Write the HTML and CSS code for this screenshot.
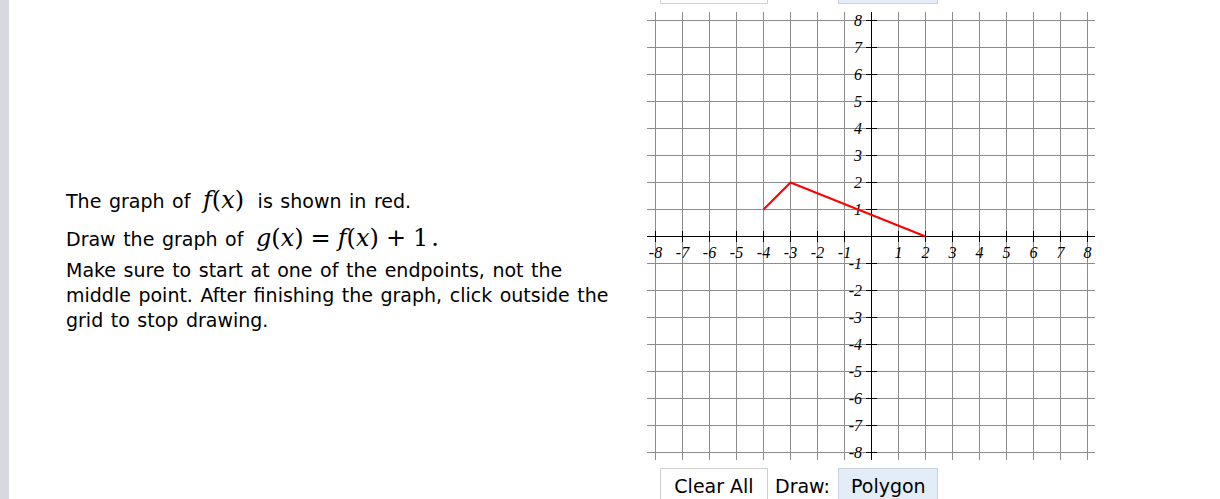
FILE: index.html
```html
<!DOCTYPE html>
<html lang="en">
<head>
  <meta charset="UTF-8" />
  <title>Graph transformation</title>
  <link rel="stylesheet" href="styles.css">
</head>
<body>
  <div class="page">
    <!-- bottom edge of the previous question's toolbar, scrolled out of view -->
    <div class="tools tools-prev">
      <div class="btn btn-clear"></div><span class="draw-label"></span><div class="btn btn-mode"></div>
    </div>

    <div class="question">
      <div class="prompt">
        <div class="line line-math">The graph of <span class="math"><i>f</i>(<i>x</i>)</span> is shown in red.</div>
        <div class="line line-math">Draw the graph of <span class="math math-end"><i>g</i>(<i>x</i>)<span class="op">=</span><i>f</i>(<i>x</i>)<span class="op">+</span>1<span class="dot">.</span></span></div>
        <div class="line">Make sure to start at one of the endpoints, not the middle point. After finishing the graph, click outside the grid to stop drawing.</div>
      </div>

      <div class="graph">
        <svg class="grid" width="448" height="448" viewBox="0 0 448 448">
          <!-- grid lines -->
          <path class="gridline" d="M8.5 0V448M35.5 0V448M62.5 0V448M89.5 0V448M116.5 0V448M143.5 0V448M170.5 0V448M197.5 0V448M251.5 0V448M278.5 0V448M305.5 0V448M332.5 0V448M359.5 0V448M386.5 0V448M413.5 0V448M440.5 0V448
            M0 8.5H448M0 35.5H448M0 62.5H448M0 89.5H448M0 116.5H448M0 143.5H448M0 170.5H448M0 197.5H448M0 251.5H448M0 278.5H448M0 305.5H448M0 332.5H448M0 359.5H448M0 386.5H448M0 413.5H448M0 440.5H448"/>
          <!-- axes and ticks -->
          <path class="axis" d="M0 224.5H448M224.5 0V448
            M8.5 219V230M35.5 219V230M62.5 219V230M89.5 219V230M116.5 219V230M143.5 219V230M170.5 219V230M197.5 219V230M251.5 219V230M278.5 219V230M305.5 219V230M332.5 219V230M359.5 219V230M386.5 219V230M413.5 219V230M440.5 219V230
            M219 8.5H230M219 35.5H230M219 62.5H230M219 89.5H230M219 116.5H230M219 143.5H230M219 170.5H230M219 197.5H230M219 251.5H230M219 278.5H230M219 305.5H230M219 332.5H230M219 359.5H230M219 386.5H230M219 413.5H230M219 440.5H230"/>
          <!-- x labels -->
          <g class="label label-x">
            <text x="8.5" y="246">-8</text>
            <text x="35.5" y="246">-7</text>
            <text x="62.5" y="246">-6</text>
            <text x="89.5" y="246">-5</text>
            <text x="116.5" y="246">-4</text>
            <text x="143.5" y="246">-3</text>
            <text x="170.5" y="246">-2</text>
            <text x="197.5" y="246">-1</text>
            <text x="251.5" y="246">1</text>
            <text x="278.5" y="246">2</text>
            <text x="305.5" y="246">3</text>
            <text x="332.5" y="246">4</text>
            <text x="359.5" y="246">5</text>
            <text x="386.5" y="246">6</text>
            <text x="413.5" y="246">7</text>
            <text x="440.5" y="246">8</text>
          </g>
          <!-- y labels -->
          <g class="label label-y">
            <text x="215" y="14">8</text>
            <text x="215" y="41">7</text>
            <text x="215" y="68">6</text>
            <text x="215" y="95">5</text>
            <text x="215" y="122">4</text>
            <text x="215" y="149">3</text>
            <text x="215" y="176">2</text>
            <text x="215" y="203">1</text>
            <text x="215" y="257">-1</text>
            <text x="215" y="284">-2</text>
            <text x="215" y="311">-3</text>
            <text x="215" y="338">-4</text>
            <text x="215" y="365">-5</text>
            <text x="215" y="392">-6</text>
            <text x="215" y="419">-7</text>
            <text x="215" y="446">-8</text>
          </g>
          <!-- f(x) -->
          <polyline class="curve" points="116.5,197.5 143.5,170.5 278.5,224.5"/>
        </svg>

        <div class="tools">
          <button class="btn btn-clear">Clear All</button><span class="draw-label">Draw:</span><button class="btn btn-mode">Polygon</button>
        </div>
      </div>
    </div>
  </div>
</body>
</html>
```

FILE: styles.css
```css
* { box-sizing: border-box; }
html, body { height: 100%; }
body {
  margin: 0; background: #fff; color: #000;
  font-family: "DejaVu Sans", Verdana, sans-serif;
  overflow: hidden;
}
.page {
  display: flow-root;
  height: 100%;
  border-left: 9px solid #e4e4ec;
  border-image: linear-gradient(to right, #d8d8e3, #efeff4) 1;
}

/* toolbar under each graph */
.tools {
  display: flex; align-items: center;
  padding-left: 13px; margin-top: 8px;
  font-size: 19px;
}
.tools-prev {
  margin-top: -31px; margin-left: 638px;
}
.btn {
  font: inherit; color: #000;
  height: 35px; padding: 0 12px;
  background: #fff; border: 1px solid #cfcfcf;
}
.btn-clear { width: 108px; }
.btn-mode {
  width: 100px;
  background: #e3edf7; border-color: #cad4de; padding: 0 12px;
}
.draw-label { width: 70px; padding-left: 7px; }

/* question row */
.question {
  display: flex; align-items: center;
  margin-top: 8px;
}
.prompt {
  width: 638px; padding: 0 24px 0 57px;
  font-size: 19px; line-height: 25px; word-spacing: 1.5px;
}
.line-math { line-height: 37px; }
.math {
  font-family: "DejaVu Serif", "Liberation Serif", serif;
  font-size: 24px; margin: 0 6px 0 5px; word-spacing: 0;
}
.math-end { margin-right: 0; }
.op { margin: 0 7px; }
.dot { margin-left: 3px; }

/* graph */
.graph { display: flex; flex-direction: column; }
.grid { display: block; }
.gridline { stroke: #8c8c8c; stroke-width: 1; fill: none; }
.axis { stroke: #000; stroke-width: 1; fill: none; }
.curve { stroke: #f00; stroke-width: 2; fill: none; }
.label {
  font-family: "Liberation Serif", "Times New Roman", serif;
  font-style: italic; font-size: 16px; fill: #000;
}
.label-x { text-anchor: middle; }
.label-y { text-anchor: end; }
```
